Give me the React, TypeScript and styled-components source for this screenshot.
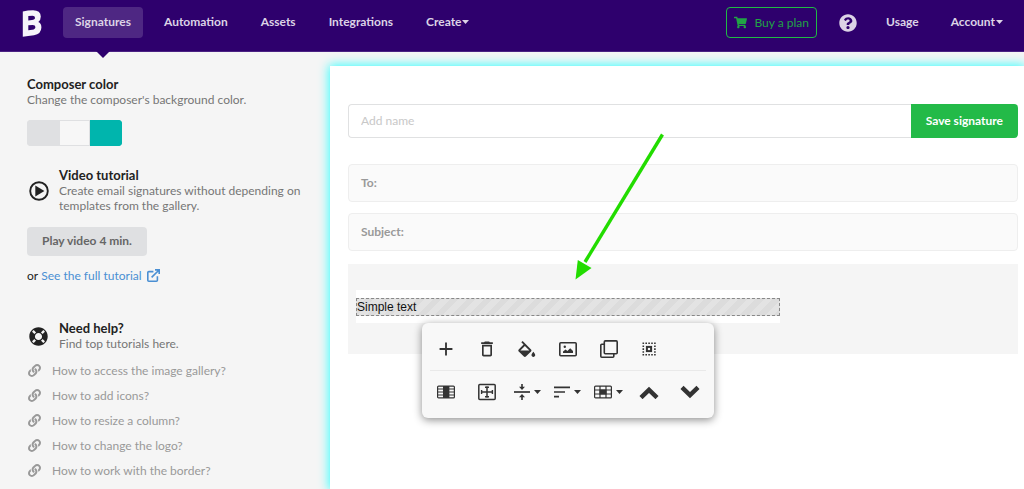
import React from "react";
import styled, { createGlobalStyle, css } from "styled-components";
import {
  FaLifeRing,
  FaLink,
  FaQuestionCircle,
  FaShoppingCart,
} from "react-icons/fa";
import { MdAdd, MdDeleteOutline } from "react-icons/md";

const GlobalStyle = createGlobalStyle`
  *, *::before, *::after { box-sizing: border-box; }
  body {
    margin: 0;
    background: #f5f5f5;
    color: #222;
    font-family: Lato, "Liberation Sans", sans-serif;
    font-size: 12px;
    line-height: 15px;
  }
  button, input { font: inherit; }
  button { cursor: pointer; }
  a { text-decoration: none; }
  svg { display: block; flex: none; }
`;

const Page = styled.div`
  display: flex;
  flex-direction: column;
  height: 100vh;
  overflow: hidden;
`;

/* ---------- header ---------- */

const Header = styled.header`
  flex: none;
  display: flex;
  align-items: flex-start;
  justify-content: space-between;
  height: 52px;
  padding: 7px 9px 0 22px;
  background: #2e006d;
  border-bottom: 1px solid #4b2283;
`;

const Nav = styled.nav<{ $gap: number }>`
  display: flex;
  align-items: center;
  gap: ${(p) => p.$gap}px;
`;

const Logo = styled.a`
  display: block;
  margin-right: 12px;
`;

const navItem = css`
  display: flex;
  align-items: center;
  gap: 1px;
  height: 31px;
  padding: 0 12px 2px;
  border: 0;
  border-radius: 4px;
  background: transparent;
  color: #dcd3e6;
  font-weight: 700;
  white-space: nowrap;
`;

const NavLink = styled.a<{ $active?: boolean }>`
  ${navItem}
  ${(p) =>
    p.$active &&
    css`
      position: relative;
      background: #4e2783;
      &::after {
        content: "";
        position: absolute;
        top: 44px;
        left: 50%;
        margin-left: -7px;
        border: 7px solid transparent;
        border-top-color: #2e006d;
        border-bottom: 0;
      }
    `}
`;

const NavButton = styled.button`
  ${navItem}
`;

const BuyLink = styled.a`
  display: flex;
  align-items: center;
  gap: 7px;
  height: 31px;
  padding: 0 7px;
  border: 1px solid #21ba45;
  border-radius: 4px;
  color: #21a345;
  white-space: nowrap;
`;

const HelpButton = styled.button`
  display: flex;
  margin: 0 9px 0 14px;
  padding: 0;
  border: 0;
  background: transparent;
  color: #dcd3e6;
`;

/* ---------- sidebar ---------- */

const Body = styled.div`
  flex: 1;
  min-height: 0;
  display: flex;
`;

const Sidebar = styled.aside`
  flex: none;
  width: 330px;
  padding: 25px 16px 0 27px;
  overflow: hidden;
`;

const Title = styled.h2`
  margin: 0;
  font-size: 13px;
  font-weight: 700;
  line-height: 15px;
`;

const Hint = styled.p`
  margin: 0;
  color: #767676;
`;

const Swatches = styled.div`
  display: flex;
  width: 95px;
  height: 26px;
  margin: 13px 0 22px;
  border-radius: 4px;
  overflow: hidden;
`;

const Swatch = styled.button<{ $color: string; $edge: string }>`
  flex: 1;
  padding: 0;
  border: 1px solid ${(p) => p.$edge};
  background: ${(p) => p.$color};
`;

const Topic = styled.section`
  display: flex;
  align-items: center;
  gap: 9px;
`;

const TopicIcon = styled.span`
  flex: none;
  display: flex;
  justify-content: center;
  width: 23px;
`;

const PlayButton = styled.button`
  display: block;
  height: 29px;
  margin: 14px 0 12px;
  padding: 0 15px 2px;
  border: 0;
  border-radius: 4px;
  background: #dfe0e2;
  color: #666;
  font-weight: 700;
`;

const TutorialLine = styled.p`
  display: flex;
  align-items: center;
  gap: 3px;
  margin: 0 0 38px;
`;

const TutorialLink = styled.a`
  display: flex;
  align-items: center;
  gap: 5px;
  color: #4a8fd3;
`;

const LinkList = styled.ul`
  margin: 7px 0 0;
  padding: 0;
  list-style: none;
`;

const HelpLink = styled.a`
  display: flex;
  align-items: center;
  gap: 11px;
  height: 25px;
  padding-left: 1px;
  color: #999;
`;

/* ---------- composer ---------- */

const Composer = styled.main`
  flex: 1;
  min-width: 0;
  margin-top: 14px;
  padding: 38px 6px 0 18px;
  background: #fff;
  box-shadow: 0 0 10px 1px #3ff;
  clip-path: inset(-14px 0 0 -14px);
`;

const NameRow = styled.form`
  display: flex;
  height: 34px;
  margin-bottom: 26px;
`;

const NameInput = styled.input`
  flex: 1;
  min-width: 0;
  padding: 0 12px 2px;
  border: 1px solid #e0e1e2;
  border-right: 0;
  border-radius: 4px 0 0 4px;
  outline: 0;
  &::placeholder {
    color: #c8c8c8;
  }
`;

const SaveButton = styled.button`
  padding: 0 15px 1px;
  border: 0;
  border-radius: 0 4px 4px 0;
  background: #23ba48;
  color: #fff;
  font-weight: 700;
`;

const Field = styled.label`
  display: flex;
  align-items: center;
  gap: 8px;
  height: 38px;
  margin-bottom: 11px;
  padding: 0 12px 2px;
  border: 1px solid #eee;
  border-radius: 4px;
  background: #fafafa;
  color: #999;
  font-weight: 700;
`;

const FieldInput = styled.input`
  flex: 1;
  min-width: 0;
  padding: 0;
  border: 0;
  outline: 0;
  background: transparent;
`;

const Canvas = styled.section`
  position: relative;
  margin-top: 13px;
  padding: 26px 8px 31px;
  background: #f5f5f5;
`;

const Signature = styled.div`
  width: 424px;
  max-width: 100%;
  padding: 8px 0 7px;
  background: #fff;
`;

const TextBlock = styled.div`
  height: 18px;
  border: 1px dashed #888;
  background: repeating-linear-gradient(
    135deg,
    #e3e3e3 0 6px,
    #dcdcdc 6px 12px
  );
  color: #111;
  font-family: "Liberation Sans", Arial, sans-serif;
  line-height: 16px;
`;

const Toolbar = styled.div`
  position: absolute;
  top: 59px;
  left: 74px;
  width: 292px;
  padding: 5px 4px;
  border-radius: 6px;
  background: #f8f8f8;
  box-shadow: 0 2px 8px rgba(0, 0, 0, 0.45);
`;

const ToolRow = styled.div`
  display: grid;
  grid-template-columns: repeat(7, 1fr);
  height: 42px;
`;

const Divider = styled.hr`
  height: 1px;
  margin: 0 4px;
  border: 0;
  background: #e9e9e9;
`;

const Tool = styled.button`
  display: flex;
  align-items: center;
  justify-content: center;
  gap: 4px;
  padding: 0;
  border: 0;
  background: transparent;
  color: #333;
`;

const Pointer = styled.svg`
  position: absolute;
  top: -132px;
  left: 227px;
  pointer-events: none;
`;

/* ---------- drawings ---------- */

const Caret = () => (
  <svg width="7" height="4" viewBox="0 0 7 4" fill="currentColor">
    <path d="M0 0h7L3.5 4z" />
  </svg>
);

const PlayGlyph = () => (
  <svg width="20" height="20" viewBox="0 0 20 20" fill="currentColor">
    <circle
      cx="10"
      cy="10"
      r="8.8"
      fill="none"
      stroke="currentColor"
      strokeWidth="1.9"
    />
    <path d="M6.3 4.6V15.4L15.4 10z" />
  </svg>
);

const ExternalGlyph = () => (
  <svg
    width="13"
    height="13"
    viewBox="0 0 13 13"
    fill="none"
    stroke="currentColor"
    strokeWidth="1.6"
  >
    <path d="M6.4 2.6H1.8q-1 0-1 1v7.6q0 1 1 1h7.6q1 0 1-1V7.2" />
    <path d="M4.6 8.4L11.8 1.2M8 .9h4.2v4.2" />
  </svg>
);

const FillGlyph = () => (
  <svg width="18" height="16" viewBox="3 0 18.5 17" fill="currentColor">
    <path d="M16.56 8.94L7.62 0 6.21 1.41l2.38 2.38-5.15 5.15c-.59.59-.59 1.54 0 2.12l5.5 5.5c.29.29.68.44 1.06.44s.77-.15 1.06-.44l5.5-5.5c.59-.58.59-1.53 0-2.12zM5.21 10L10 5.21 14.79 10H5.21zM19 11.5s-2 2.17-2 3.5c0 1.1.9 2 2 2s2-.9 2-2c0-1.33-2-3.5-2-3.5z" />
  </svg>
);

const Glyph = ({ children }: { children: React.ReactNode }) => (
  <svg
    width="18"
    height="18"
    viewBox="0 0 18 18"
    fill="none"
    stroke="currentColor"
    strokeWidth="1.6"
  >
    {children}
  </svg>
);

const SmallGlyph = ({ children }: { children: React.ReactNode }) => (
  <svg
    width="16"
    height="18"
    viewBox="1 0 16 18"
    fill="none"
    stroke="currentColor"
    strokeWidth="1.6"
  >
    {children}
  </svg>
);

const ImageGlyph = () => (
  <Glyph>
    <rect x="0.8" y="2.8" width="16.4" height="12.9" rx="1" />
    <path
      d="M4 13V11.6L6.6 9.6L8.4 11L11.2 8.2L14 11V13z"
      fill="currentColor"
      stroke="none"
    />
    <circle cx="5.8" cy="6.8" r="1.2" fill="currentColor" stroke="none" />
  </Glyph>
);

const CopyGlyph = () => (
  <Glyph>
    <rect x="4.3" y="0.9" width="12.9" height="12.9" rx="1" />
    <path d="M4 4.2H1.8q-1 0-1 1v11q0 1 1 1h11q1 0 1-1V14" />
  </Glyph>
);

const SelectGlyph = () => (
  <Glyph>
    <rect x="6.9" y="6.9" width="4.2" height="4.2" strokeWidth="2" />
    <path
      d="M2.5 3.3h13.2M2.5 14.7h13.2"
      strokeWidth="1.6"
      strokeDasharray="1.6 1.3"
    />
    <path
      d="M3.3 5.4v8M14.9 5.4v8"
      strokeWidth="1.6"
      strokeDasharray="1.6 1.3"
    />
  </Glyph>
);

const ColumnGlyph = () => (
  <Glyph>
    <rect x="0.6" y="3.1" width="16.8" height="11.8" rx="1" strokeWidth="1.2" />
    <path d="M0.6 6h16.8M0.6 9h16.8M0.6 12h16.8" strokeWidth="1.1" />
    <path d="M6 3h6.4v12H6z" fill="currentColor" stroke="none" />
  </Glyph>
);

const ResizeGlyph = () => (
  <Glyph>
    <rect x="0.8" y="1.6" width="16.4" height="14.8" rx="1" strokeWidth="1.5" />
    <path d="M9 3.5v11M3 9h12" strokeWidth="1.5" />
    <path d="M7 4.2h4M7 13.8h4M3.6 7v4M14.4 7v4" strokeWidth="1.4" />
  </Glyph>
);

const VerticalAlignGlyph = () => (
  <SmallGlyph>
    <path d="M1 9h16" strokeWidth="1.7" />
    <path d="M9 1v4M9 17v-4" strokeWidth="1.6" />
    <path
      d="M6 3.8h6L9 7zM6 14.2h6L9 11z"
      fill="currentColor"
      stroke="none"
    />
  </SmallGlyph>
);

const TextAlignGlyph = () => (
  <SmallGlyph>
    <path d="M1 4.4h16M1 9h11M1 13.6h5" strokeWidth="1.7" />
  </SmallGlyph>
);

const TableGlyph = () => (
  <Glyph>
    <rect x="0.6" y="3.1" width="16.8" height="11.8" rx="1" strokeWidth="1.2" />
    <path
      d="M0.6 7h16.8M0.6 11h16.8M6 3v12M12 3v12"
      strokeWidth="1.2"
    />
    <path d="M5.5 6.5h7v5h-7z" fill="currentColor" stroke="none" />
  </Glyph>
);

const Chevron = ({ down }: { down?: boolean }) => (
  <svg
    width="20"
    height="14"
    viewBox="0 0 20 14"
    fill="none"
    stroke="currentColor"
    strokeWidth="4.4"
  >
    <path d={down ? "M2 2.4L10 10.2L18 2.4" : "M2 12.6L10 4.8L18 12.6"} />
  </svg>
);

const helpLinks = [
  "How to access the image gallery?",
  "How to add icons?",
  "How to resize a column?",
  "How to change the logo?",
  "How to work with the border?",
];

export default function App() {
  return (
    <>
      <GlobalStyle />
      <Page>
        <Header>
          <Nav $gap={9} aria-label="Main">
            <Logo href="#" aria-label="Home">
              <svg width="20" height="30" viewBox="0 0 20 30" fill="#f6f3fa">
                <path
                  fillRule="evenodd"
                  d="M.8 3.6Q6 2.2 11 2.2Q18.6 2.2 18.8 8.6Q18.8 12.4 16.3 14Q19.4 15.4 19.4 19.4Q19.2 26 12 27.2Q6 28 .8 28.8ZM6.3 8V12.4L10 12.1Q13 11.7 13 9.7Q13 7.7 10.5 7.7ZM6.3 17.2V22.2L10.4 21.8Q13.4 21.3 13.4 19Q13.4 16.8 10.5 16.9Z"
                />
              </svg>
            </Logo>
            <NavLink href="#" $active aria-current="page">
              Signatures
            </NavLink>
            <NavLink href="#">Automation</NavLink>
            <NavLink href="#">Assets</NavLink>
            <NavLink href="#">Integrations</NavLink>
            <NavButton type="button">
              Create
              <Caret />
            </NavButton>
          </Nav>
          <Nav $gap={8} aria-label="Account">
            <BuyLink href="#">
              <FaShoppingCart size={13} />
              Buy a plan
            </BuyLink>
            <HelpButton type="button" aria-label="Help">
              <FaQuestionCircle size={18} />
            </HelpButton>
            <NavLink href="#">Usage</NavLink>
            <NavButton type="button">
              Account
              <Caret />
            </NavButton>
          </Nav>
        </Header>

        <Body>
          <Sidebar>
            <Title>Composer color</Title>
            <Hint>Change the composer's background color.</Hint>
            <Swatches>
              <Swatch
                type="button"
                $color="#dfe0e2"
                $edge="#dfe0e2"
                aria-label="Gray"
              />
              <Swatch
                type="button"
                $color="#f7f7f7"
                $edge="#dfe0e2"
                aria-label="White"
              />
              <Swatch
                type="button"
                $color="#00b5ad"
                $edge="#00b5ad"
                aria-label="Teal"
              />
            </Swatches>

            <Topic>
              <TopicIcon>
                <PlayGlyph />
              </TopicIcon>
              <div>
                <Title>Video tutorial</Title>
                <Hint>
                  Create email signatures without depending on templates from
                  the gallery.
                </Hint>
              </div>
            </Topic>
            <PlayButton type="button">Play video 4 min.</PlayButton>
            <TutorialLine>
              or
              <TutorialLink href="#">
                See the full tutorial
                <ExternalGlyph />
              </TutorialLink>
            </TutorialLine>

            <Topic>
              <TopicIcon>
                <FaLifeRing size={19} />
              </TopicIcon>
              <div>
                <Title>Need help?</Title>
                <Hint>Find top tutorials here.</Hint>
              </div>
            </Topic>
            <LinkList>
              {helpLinks.map((label) => (
                <li key={label}>
                  <HelpLink href="#">
                    <FaLink size={13} />
                    {label}
                  </HelpLink>
                </li>
              ))}
              <li>
                <HelpLink href="#" aria-label="More tutorials">
                  <FaLink size={13} />
                </HelpLink>
              </li>
            </LinkList>
          </Sidebar>

          <Composer>
            <NameRow onSubmit={(e) => e.preventDefault()}>
              <NameInput placeholder="Add name" aria-label="Signature name" />
              <SaveButton type="submit">Save signature</SaveButton>
            </NameRow>
            <Field>
              To:
              <FieldInput readOnly />
            </Field>
            <Field>
              Subject:
              <FieldInput readOnly />
            </Field>
            <Canvas>
              <Signature>
                <TextBlock>Simple text</TextBlock>
              </Signature>
              <Toolbar role="toolbar" aria-label="Block tools">
                <ToolRow>
                  <Tool type="button" aria-label="Add">
                    <MdAdd size={22} />
                  </Tool>
                  <Tool type="button" aria-label="Delete">
                    <MdDeleteOutline size={20} />
                  </Tool>
                  <Tool type="button" aria-label="Fill color">
                    <FillGlyph />
                  </Tool>
                  <Tool type="button" aria-label="Image">
                    <ImageGlyph />
                  </Tool>
                  <Tool type="button" aria-label="Duplicate">
                    <CopyGlyph />
                  </Tool>
                  <Tool type="button" aria-label="Select">
                    <SelectGlyph />
                  </Tool>
                </ToolRow>
                <Divider />
                <ToolRow>
                  <Tool type="button" aria-label="Column">
                    <ColumnGlyph />
                  </Tool>
                  <Tool type="button" aria-label="Resize">
                    <ResizeGlyph />
                  </Tool>
                  <Tool type="button" aria-label="Vertical align">
                    <VerticalAlignGlyph />
                    <Caret />
                  </Tool>
                  <Tool type="button" aria-label="Text align">
                    <TextAlignGlyph />
                    <Caret />
                  </Tool>
                  <Tool type="button" aria-label="Table">
                    <TableGlyph />
                    <Caret />
                  </Tool>
                  <Tool type="button" aria-label="Move up">
                    <Chevron />
                  </Tool>
                  <Tool type="button" aria-label="Move down">
                    <Chevron down />
                  </Tool>
                </ToolRow>
              </Toolbar>
              <Pointer width="90" height="150" viewBox="0 0 90 150">
                <path d="M87.5 2.5L10 130" stroke="#22dc00" strokeWidth="3.4" />
                <path d="M.5 147.5L2.8 128L16.5 136Z" fill="#22dc00" />
              </Pointer>
            </Canvas>
          </Composer>
        </Body>
      </Page>
    </>
  );
}
